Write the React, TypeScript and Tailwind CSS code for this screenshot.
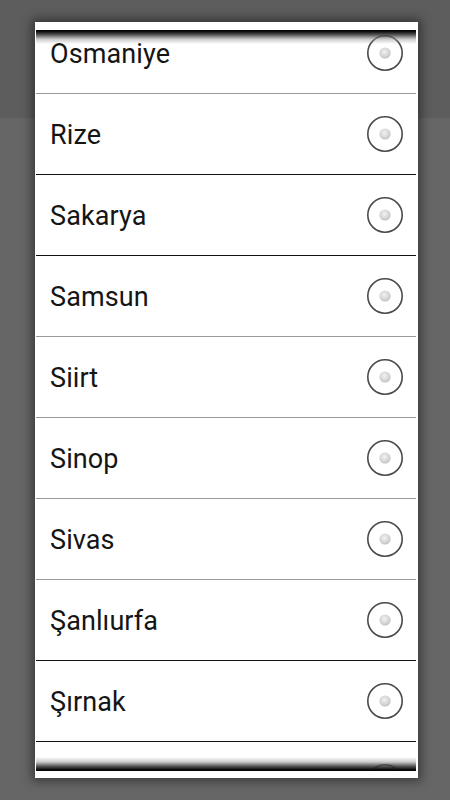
import React from "react";

const rows: { name: string; line: string }[] = [
  { name: "Osmaniye", line: "border-[#9a9a9a]" },
  { name: "Rize", line: "border-[#111111]" },
  { name: "Sakarya", line: "border-[#111111]" },
  { name: "Samsun", line: "border-[#9a9a9a]" },
  { name: "Siirt", line: "border-[#9a9a9a]" },
  { name: "Sinop", line: "border-[#9a9a9a]" },
  { name: "Sivas", line: "border-[#9a9a9a]" },
  { name: "Şanlıurfa", line: "border-[#111111]" },
  { name: "Şırnak", line: "border-[#111111]" },
  { name: "", line: "border-[#9a9a9a]" },
];

function Radio() {
  return (
    <svg width="38" height="38" viewBox="0 0 38 38" className="shrink-0">
      <defs>
        <radialGradient id="dot" cx="45%" cy="40%" r="60%">
          <stop offset="0%" stopColor="#f2f2f2" />
          <stop offset="70%" stopColor="#d4d4d4" />
          <stop offset="100%" stopColor="#bdbdbd" />
        </radialGradient>
      </defs>
      <circle cx="19" cy="19" r="17.2" fill="#ffffff" stroke="#4a4a4a" strokeWidth="1.6" />
      <circle cx="19" cy="19" r="5.6" fill="url(#dot)" />
    </svg>
  );
}

export default function App() {
  return (
    <div
      className="w-[450px] h-[800px] overflow-hidden bg-[linear-gradient(#5d5d5d_0px,#5d5d5d_118px,#666666_118px)] pt-[22px] pl-[35px]"
      style={{ fontFamily: "Roboto, 'Noto Sans', sans-serif" }}
    >
      <div className="w-[383px] h-[756px] bg-white shadow-[0_0_10px_3px_rgba(0,0,0,0.45)] pt-[8px] pl-[1px] pr-[2px]">
        <div className="relative h-[741px] overflow-hidden">
          <div className="flex flex-col mt-[-17px]">
            {rows.map((r, i) => (
              <div
                key={i}
                className={`h-[81px] shrink-0 border-b ${r.line} flex items-center justify-between pl-[14px] pr-[12px]`}
              >
                <span className="text-[27px] leading-none text-[#151515] pt-[2px] tracking-[0.1px]">{r.name}</span>
                <Radio />
              </div>
            ))}
          </div>
          <div className="absolute top-0 left-0 right-0 h-[14px] bg-[linear-gradient(to_bottom,#000000_0%,#111111_12%,rgba(60,60,60,0.85)_35%,rgba(150,150,150,0.5)_65%,rgba(255,255,255,0)_100%)]" />
          <div className="absolute bottom-0 left-0 right-0 h-[14px] bg-[linear-gradient(to_top,#000000_0%,#111111_12%,rgba(60,60,60,0.85)_35%,rgba(150,150,150,0.5)_65%,rgba(255,255,255,0)_100%)]" />
        </div>
      </div>
    </div>
  );
}
